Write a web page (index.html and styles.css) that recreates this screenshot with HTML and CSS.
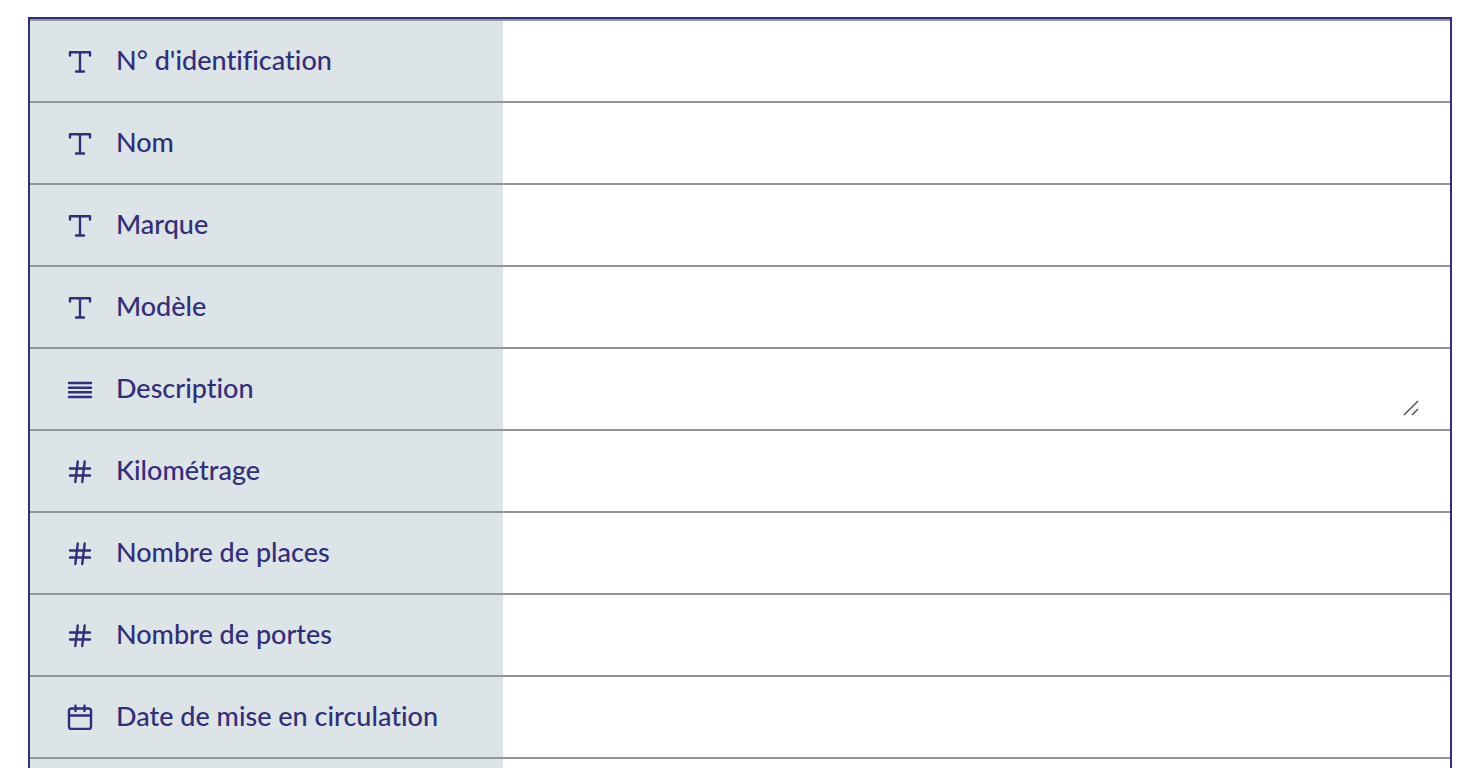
FILE: index.html
```
<!DOCTYPE html>
<html lang="fr">
<head>
    <meta charset="UTF-8">
    <meta name="viewport" content="width=device-width, initial-scale=1.0">
    <title>Véhicule</title>
    <link rel="stylesheet" href="styles.css">
</head>
<body>
    <!-- Shared icons -->
    <svg class="sprite" aria-hidden="true">
        <symbol id="icon-text" viewBox="0 -1 28 28">
            <path d="M4 8.5V5.2h20v3.3M14 5.2v19.3M10 24.5h8"/>
        </symbol>
        <symbol id="icon-lines" viewBox="0 -1 28 28">
            <path d="M3 8h22M3 12.7h22M3 17.3h22M3 22h22"/>
        </symbol>
        <symbol id="icon-number" viewBox="0 -1 28 28">
            <path d="M4 11.5h20M4 18.5h20M11.8 4.5L9.3 25M18.7 4.5L16.2 25"/>
        </symbol>
        <symbol id="icon-date" viewBox="0 -1 28 28">
            <rect x="3" y="5.5" width="22" height="20.5" rx="2.5"/>
            <path d="M3 12.5h22M9.5 2.7v5.3M18.5 2.7v5.3"/>
        </symbol>
    </svg>

    <form class="form">
        <div class="row">
            <label class="label" for="identification"><svg class="icon"><use href="#icon-text"/></svg>N° d'identification</label>
            <div class="value"><input type="text" id="identification"></div>
        </div>
        <div class="row">
            <label class="label" for="nom"><svg class="icon"><use href="#icon-text"/></svg>Nom</label>
            <div class="value"><input type="text" id="nom"></div>
        </div>
        <div class="row">
            <label class="label" for="marque"><svg class="icon"><use href="#icon-text"/></svg>Marque</label>
            <div class="value"><input type="text" id="marque"></div>
        </div>
        <div class="row">
            <label class="label" for="modele"><svg class="icon"><use href="#icon-text"/></svg>Modèle</label>
            <div class="value"><input type="text" id="modele"></div>
        </div>
        <div class="row">
            <label class="label" for="description"><svg class="icon"><use href="#icon-lines"/></svg>Description</label>
            <div class="value">
                <textarea id="description"></textarea>
                <svg class="grip" viewBox="0 0 16 16" aria-hidden="true"><path d="M1 15L15 1M9 15l6-6"/></svg>
            </div>
        </div>
        <div class="row">
            <label class="label" for="kilometrage"><svg class="icon"><use href="#icon-number"/></svg>Kilométrage</label>
            <div class="value"><input type="text" inputmode="numeric" id="kilometrage"></div>
        </div>
        <div class="row">
            <label class="label" for="places"><svg class="icon"><use href="#icon-number"/></svg>Nombre de places</label>
            <div class="value"><input type="text" inputmode="numeric" id="places"></div>
        </div>
        <div class="row">
            <label class="label" for="portes"><svg class="icon"><use href="#icon-number"/></svg>Nombre de portes</label>
            <div class="value"><input type="text" inputmode="numeric" id="portes"></div>
        </div>
        <div class="row">
            <label class="label" for="circulation"><svg class="icon"><use href="#icon-date"/></svg>Date de mise en circulation</label>
            <div class="value"><input type="text" id="circulation"></div>
        </div>
        <div class="row">
            <div class="label"></div>
            <div class="value"></div>
        </div>
    </form>
</body>
</html>
```
FILE: styles.css
```
:root {
    --primary: #322e7a;
    --label-bg: #dce4e7;
    --line: #949599;
}

* {
    box-sizing: border-box;
}

body {
    margin: 0;
    padding: 17px 22px 0 28px;
    height: 100vh;
    overflow: hidden;
    background-color: #fff;
    color: var(--primary);
    font-family: Lato, sans-serif;
    font-size: 27px;
    line-height: 32px;
    font-weight: 500;
    font-variant-ligatures: none;
}

.sprite {
    display: none;
}

.form {
    border: 2px solid var(--primary);
}

.row {
    display: grid;
    grid-template-columns: 1fr 2fr;
    min-height: 82px;
    border-top: 2px solid var(--line);
}

.label {
    display: flex;
    align-items: center;
    gap: 22px;
    padding: 0 36px 2px;
    background-color: var(--label-bg);
    white-space: nowrap;
}

.icon {
    flex: none;
    width: 28px;
    height: 28px;
    fill: none;
    stroke: currentColor;
    stroke-width: 2.4;
    stroke-linecap: round;
    stroke-linejoin: round;
}

.value {
    position: relative;
    display: flex;
    padding: 12px 30px;
}

input,
textarea {
    flex: 1;
    width: 100%;
    height: 56px;
    padding: 12px 0;
    border: none;
    outline: none;
    background: none;
    color: inherit;
    font: inherit;
    resize: none;
}

/* Resize handle in the textarea corner */
.grip {
    position: absolute;
    right: 31px;
    bottom: 13px;
    width: 16px;
    height: 16px;
    fill: none;
    stroke: #555;
    stroke-width: 1.5;
    pointer-events: none;
}
```
